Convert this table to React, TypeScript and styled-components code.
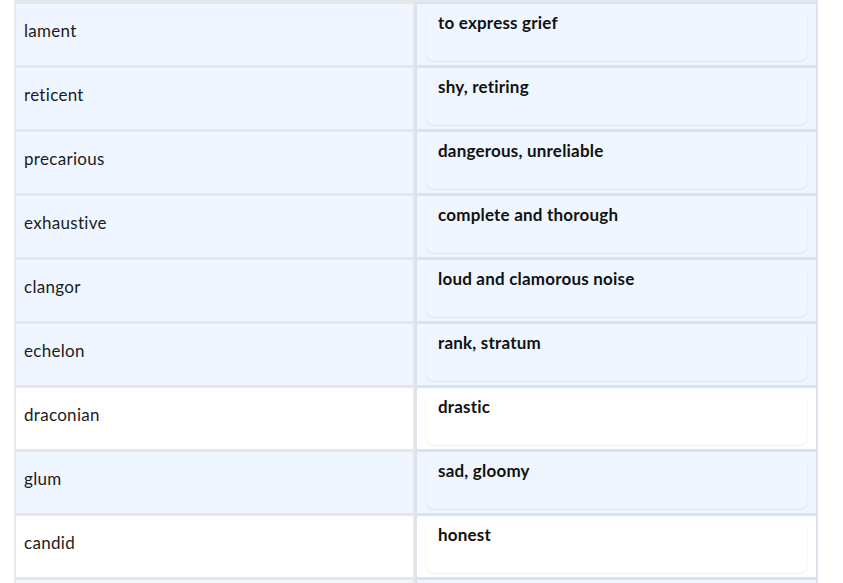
import React from "react";
import styled, { createGlobalStyle } from "styled-components";

const GlobalStyle = createGlobalStyle`
  html, body { margin: 0; padding: 0; background: #ffffff; }
  body { font-family: Lato, "Noto Sans", sans-serif; }
`;

const Page = styled.div`
  padding-left: 14px;
  width: 843px;
  height: 583px;
  overflow: hidden;
  box-sizing: border-box;
`;

const Table = styled.div`
  width: 804px;
  box-sizing: border-box;
  background: #e5e7eb;
  padding: 4px 2px 0 2px;
  display: flex;
  flex-direction: column;
  gap: 3px;
`;

const Row = styled.div`
  display: grid;
  grid-template-columns: 397px 399px;
  column-gap: 4px;
  height: 61px;
`;

const TermCell = styled.div<{ $tint: boolean }>`
  background: ${(p) => (p.$tint ? "#eff6ff" : "#ffffff")};
  padding: 16px 8px 0 8px;
  font-size: 17px;
  line-height: 22px;
  letter-spacing: 0.3px;
  color: #1c1c1c;
`;

const DefCell = styled.div<{ $tint: boolean }>`
  background: ${(p) => (p.$tint ? "#eff6ff" : "#ffffff")};
  outline: 2px solid #dbe2ee;
  padding: 6px 9px 4px 9px;
  box-sizing: border-box;
  display: flex;
`;

const DefCard = styled.div`
  flex: 1;
  border-radius: 8px;
  box-shadow: 0 1px 2px rgba(15, 23, 42, 0.06), 0 0 0 1px rgba(15, 23, 42, 0.015);
  padding: 2px 12px;
  font-size: 17px;
  line-height: 22px;
  letter-spacing: 0.2px;
  font-weight: 700;
  color: #111111;
`;

const rows: { term: string; def: string; tint: boolean }[] = [
  { term: "lament", def: "to express grief", tint: true },
  { term: "reticent", def: "shy, retiring", tint: true },
  { term: "precarious", def: "dangerous, unreliable", tint: true },
  { term: "exhaustive", def: "complete and thorough", tint: true },
  { term: "clangor", def: "loud and clamorous noise", tint: true },
  { term: "echelon", def: "rank, stratum", tint: true },
  { term: "draconian", def: "drastic", tint: false },
  { term: "glum", def: "sad, gloomy", tint: true },
  { term: "candid", def: "honest", tint: false },
  { term: "", def: "", tint: true },
];

export default function App() {
  return (
    <>
      <GlobalStyle />
      <Page>
        <Table>
          {rows.map((r, i) => (
            <Row key={i}>
              <TermCell $tint={r.tint}>{r.term}</TermCell>
              <DefCell $tint={r.tint}>
                <DefCard>{r.def}</DefCard>
              </DefCell>
            </Row>
          ))}
        </Table>
      </Page>
    </>
  );
}
